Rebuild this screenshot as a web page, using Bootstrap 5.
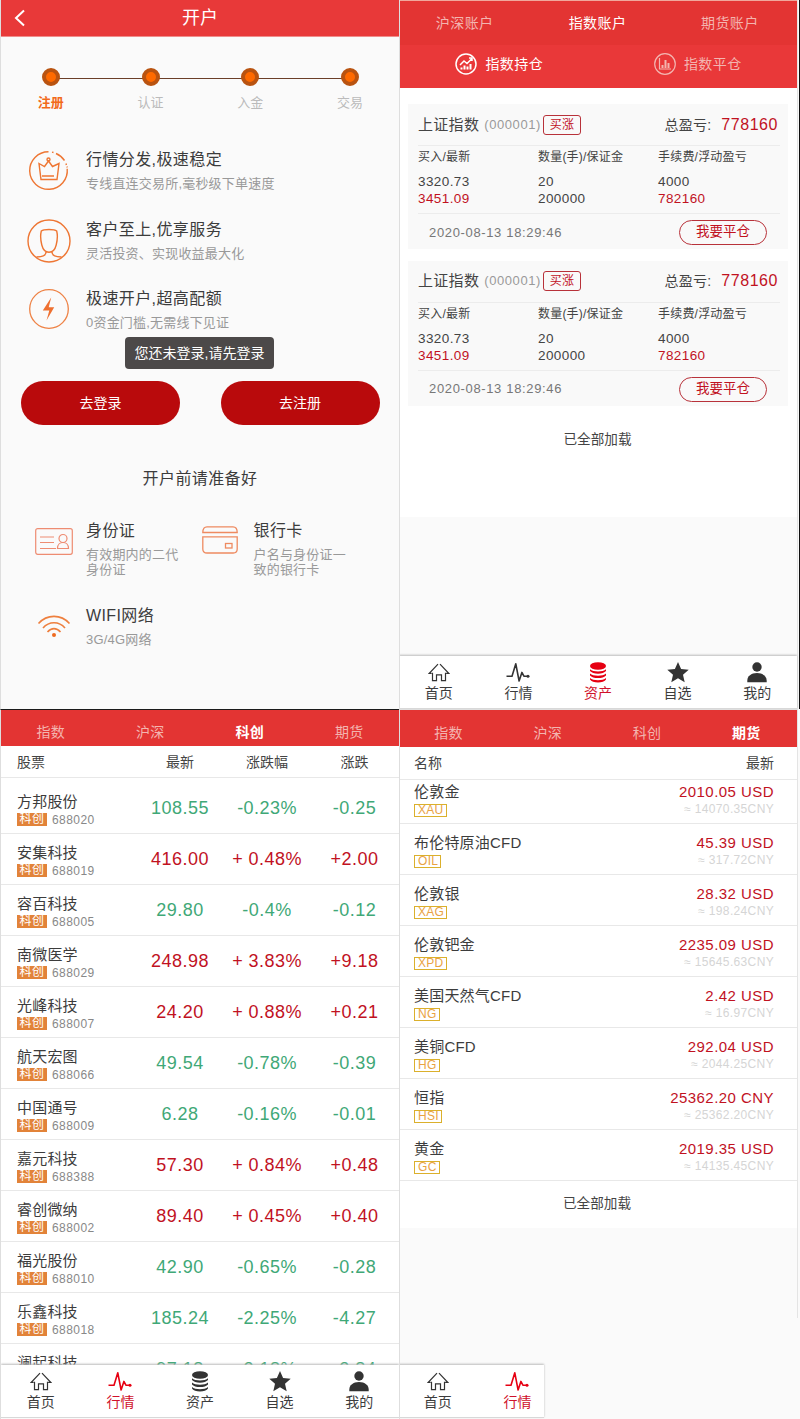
<!DOCTYPE html>
<html lang="zh-CN">
<head>
<meta charset="utf-8">
<meta name="viewport" content="width=device-width, initial-scale=1">
<title>开户</title>
<link href="https://cdn.jsdelivr.net/npm/bootstrap@5.3.0/dist/css/bootstrap.min.css" rel="stylesheet">
<style>
  body { font-family: "Liberation Sans", "Noto Sans CJK SC", sans-serif; font-size: 14px; line-height: 20px; color: #444; background: #fff; width: 800px; height: 1419px; overflow: hidden; }
  .phones { display: grid; grid-template-columns: 399px 401px; grid-template-rows: 709px 710px; }
  .phone { border-left: 1px solid #dedede; overflow: hidden; }
  .soft { background: #fafafa; }
  .bar { background: #e33433; color: #f3b5b0; }
  .bar2 { background: #e93839; }
  .bar .on { color: #fff; }
  .muted { color: #999; }
  .red { color: #c1121f; }
  .green { color: #3fa877; }
  svg { display: block; flex: none; }

  /* account opening */
  .titlebar { background: #e83939; height: 37px; font-size: 18px; border-bottom: 1px solid #ef8d8b; }
  .back { left: 12px; top: 9px; }
  .steps { padding-top: 31px; width: 399px; }
  .step { width: 25%; color: #bbb; font-size: 13px; }
  .step i { width: 18px; height: 18px; border-radius: 50%; background: #ff6a00; border: 4px solid #b95310; z-index: 1; }
  .step b { font-weight: 400; margin-top: 7px; }
  .step.now b { color: #f26a1b; font-weight: 700; }
  .step + .step::before { content: ""; position: absolute; left: -50%; width: 100%; top: 10px; height: 1px; background: #6b3f28; }
  .feature { height: 69.6px; padding-left: 85px; }
  .feature svg, .prep svg { position: absolute; }
  .h-item { font-size: 16px; letter-spacing: .4px; line-height: 24px; color: #3c3c3c; }
  .p-item { font-size: 13px; letter-spacing: .2px; line-height: 15.5px; color: #999; }
  .feature .p-item { margin-top: 4px; }
  .toastbox { left: 124px; top: 337px; width: 149px; height: 32px; border-radius: 4px; background: #4c4949; color: #fff; z-index: 2; }
  .pill { width: 159px; height: 44px; background: #b90a0c; color: #fff; border-radius: 22px; }
  .prep { padding-left: 51px; width: 167.5px; }

  /* positions */
  .pos { background: #f9f9f9; height: 145px; margin: 0 9px 11.5px 8px; padding: 0 8px 0 10px; }
  .pos .top { height: 42px; border-bottom: 1px solid #ececec; }
  .tagbuy { border: 1px solid #b8323a; border-radius: 3px; width: 38px; height: 20px; font-size: 12px; line-height: 18px; letter-spacing: .3px; color: #c1121f; margin-left: 2px; }
  .pos .mid { height: 68px; padding-top: 1px; border-bottom: 1px solid #ececec; font-size: 12px; letter-spacing: .2px; }
  .pos .num { font-size: 13.5px; letter-spacing: .4px; line-height: 17px; }
  .sell { border: 1px solid #b8323a; border-radius: 13px; width: 88px; height: 25px; line-height: 22px; color: #c1121f; margin-right: 13px; font-size: 13.5px; }

  /* bottom tab bar */
  .tabs { height: 53px; background: #fff; box-shadow: 0 -1px 2px #bbb; position: relative; border-bottom: 1px solid #d8d8d8; color: #3c3c3c; }
  .tabs a { width: 79.6px; height: 52px; padding-top: 5px; color: #3c3c3c; text-decoration: none; }
  .tabs a svg { color: #333; }
  .tabs a.on { color: #d0112b; }
  .tabs a.on svg { color: #e60012; }
  .tabs span { line-height: 20px; }

  /* quotes */
  .cols { display: grid; grid-template-columns: 136px 86px 88px 87px; }
  .qhead { height: 32px; border-bottom: 1px solid #e8e8e8; background: #fff; }
  .qrow { height: 51px; border-bottom: 1px solid #e8e8e8; background: #fff; }
  .qname { font-size: 15px; letter-spacing: .2px; line-height: 20px; color: #3c3c3c; }
  .board { background: #e28339; color: #fff; width: 30px; height: 13px; font-size: 12px; line-height: 13px; letter-spacing: .5px; }
  .code { font-size: 12px; letter-spacing: .45px; line-height: 14px; color: #888; }
  .val { font-size: 18px; letter-spacing: .45px; }
  .sym { border: 1px solid #dbb02c; color: #e9a243; font-size: 12px; line-height: 11px; height: 13px; letter-spacing: .3px; padding: 0 2px 0 3px; }
  .price { font-size: 15px; letter-spacing: .45px; line-height: 20px; }
  .cny { font-size: 12px; letter-spacing: .35px; line-height: 14px; color: #d5d5d5; }
</style>
</head>
<body>
<svg width="0" height="0" class="position-absolute">
  <symbol id="i-home" viewBox="0 0 22 22"><path d="M3.600 12.300H1.300L10 3.200M12 3.200l8.700 9.100h-2.500M4.500 11.800v7.800h4v-5.800h5v5.800h4v-7.800" fill="none" stroke="currentColor" stroke-width="1.200"/></symbol>
  <symbol id="i-pulse" viewBox="0 0 24 22"><path d="M.5 15.200H6L9.800 2.800l3.300 17.200 2.800-8.600 2 3.800h4" fill="none" stroke="currentColor" stroke-width="1.600" stroke-linejoin="round"/><circle cx="22" cy="15.200" r="1.500" fill="currentColor"/></symbol>
  <symbol id="i-coins" viewBox="0 0 18 22"><ellipse cx="9" cy="5" rx="8" ry="3.800" fill="currentColor"/><path d="M1 8.200c3 3 13 3 16 0v1.900c-2.500 3.400-13.500 3.400-16 0zM1 12.600c3 3 13 3 16 0v1.900c-2.500 3.400-13.500 3.400-16 0zM1 17c3 3 13 3 16 0v1.400c-2 4-14 4-16 0z" fill="currentColor"/></symbol>
  <symbol id="i-star" viewBox="0 0 22 22"><path d="m11 1 3.100 7 7.600.7-5.700 5 1.700 7.500-6.700-4-6.700 4L6 13.700l-5.700-5 7.600-.7z" fill="currentColor"/></symbol>
  <symbol id="i-user" viewBox="0 0 22 22"><circle cx="11" cy="6" r="4.700" fill="currentColor"/><path d="M1.300 21.200v-1.500c0-4.500 3.800-7.700 9.700-7.700s9.700 3.200 9.700 7.700v1.500z" fill="currentColor"/></symbol>
</svg>

<main class="phones">
  <!-- account opening -->
  <section class="phone soft position-relative">
    <header class="titlebar text-white d-flex align-items-center justify-content-center position-relative">
      <svg class="back position-absolute" width="14" height="18" viewBox="0 0 14 18"><path d="M11 1.500 3 9l8 7.500" fill="none" stroke="#fff" stroke-width="2"/></svg>
      <span>开户</span>
    </header>
    <div class="steps d-flex">
      <div class="step now position-relative d-flex flex-column align-items-center"><i></i><b>注册</b></div>
      <div class="step position-relative d-flex flex-column align-items-center"><i></i><b>认证</b></div>
      <div class="step position-relative d-flex flex-column align-items-center"><i></i><b>入金</b></div>
      <div class="step position-relative d-flex flex-column align-items-center"><i></i><b>交易</b></div>
    </div>
    <div style="padding-top:35px">
      <div class="feature position-relative">
        <svg style="left:26px;top:1px" width="44" height="44" viewBox="0 0 44 44" fill="none" stroke="#ee7633" stroke-width="1.400"><path d="M21.500 2.700a18.800 18.800 0 1 0 18.700 17M25 3.100l1.500.4M29 4.500a19 19 0 0 1 8.500 7M39 14.500l.4 1.500M40 17.500l.2 1"/><path d="M12 14.500l5.500 3 4-5.500 4 5.500 6.500-3-2 16H14zM15 27h12"/><circle cx="21.500" cy="10.500" r="1.500"/></svg>
        <div class="h-item">行情分发,极速稳定</div><div class="p-item">专线直连交易所,毫秒级下单速度</div>
      </div>
      <div class="feature position-relative">
        <svg style="left:26px;top:1px" width="44" height="44" viewBox="0 0 44 44" fill="none" stroke="#ee7633" stroke-width="1.400"><circle cx="22" cy="22" r="21"/><path d="M22 10.500c3.500 0 6.500.5 7.700 1.500 1 4 .8 9-.5 14-1 4-3.400 7.300-7.200 7.300S15.800 30 14.800 26c-1.300-5-1.500-10-.5-14 1.200-1 4.200-1.500 7.700-1.500zM19 33c0 4-4 4.500-9.500 5M25 33c0 4 4 4.500 9.500 5"/></svg>
        <div class="h-item">客户至上,优享服务</div><div class="p-item">灵活投资、实现收益最大化</div>
      </div>
      <div class="feature position-relative">
        <svg style="left:26px;top:0" width="44" height="44" viewBox="0 0 44 44"><circle cx="22" cy="22" r="19.300" fill="none" stroke="#ee8245" stroke-width="1.300"/><path d="m24.200 10.500-8.400 13h6.500L19.500 33.500l7.700-13.300h-5.500z" fill="#ee7030"/></svg>
        <div class="h-item">极速开户,超高配额</div><div class="p-item">0资金门槛,无需线下见证</div>
      </div>
    </div>
    <div class="toastbox position-absolute d-flex align-items-center justify-content-center">您还未登录,请先登录</div>
    <div class="d-flex justify-content-between" style="padding:24.200px 19.500px 0 20px">
      <div class="pill d-flex align-items-center justify-content-center">去登录</div>
      <div class="pill d-flex align-items-center justify-content-center">去注册</div>
    </div>
    <div class="h-item text-center" style="padding-top:42px">开户前请准备好</div>
    <div class="d-flex flex-wrap" style="padding:28px 0 0 34px">
      <div class="prep position-relative">
        <svg style="left:0;top:9px" width="38" height="27" viewBox="0 0 38 27" fill="none" stroke="#ee8c72" stroke-width="1.200"><rect x=".7" y=".7" width="36.600" height="25.600" rx="2"/><path d="M5 9h14M5 14.500h14M5 20.500h16"/><circle cx="28" cy="10.500" r="4"/><path d="M22.500 20.500c0-8 11-8 11 0z"/></svg>
        <div class="h-item">身份证</div><div class="p-item mt-1">有效期内的二代<br>身份证</div>
      </div>
      <div class="prep position-relative">
        <svg style="left:-1px;top:7px" width="36" height="28" viewBox="0 0 36 28" fill="none" stroke="#ee8a60" stroke-width="1.300"><path d="M.8 6.500C.8 2.500 2.500.8 5 .8h26c2.500 0 4.200 1.700 4.200 5.700z"/><path d="M.8 10.800h34.400V23c0 2.500-1.500 4-4 4H5c-2.700 0-4.200-1.500-4.200-4z"/><rect x="23.500" y="17.500" width="6.500" height="4.500"/></svg>
        <div class="h-item">银行卡</div><div class="p-item mt-1">户名与身份证一<br>致的银行卡</div>
      </div>
      <div class="prep position-relative" style="margin-top:26.500px">
        <svg style="left:2px;top:10px" width="34" height="24" viewBox="0 0 34 24" fill="none" stroke="#ee7f3e" stroke-width="1.600"><path d="M1.500 9.500C10 0 24 0 32.500 9.500M6 14c6-7 16-7 22 0M10.500 18c4-4.500 9-4.500 13 0"/><circle cx="17" cy="21" r="2" fill="#ee6a20" stroke="none"/></svg>
        <div class="h-item">WIFI网络</div><div class="p-item mt-1">3G/4G网络</div>
      </div>
    </div>
  </section>

  <!-- index account positions -->
  <section class="phone soft d-flex flex-column" style="border-right:1px solid #111">
    <div class="d-flex flex-column h-100" style="width:398px;border-right:1px solid #e4e4e4">
      <div class="bar" style="border-top:1px solid #f0a79c">
        <div class="d-flex text-center" style="height:44px;line-height:45px;letter-spacing:.4px">
          <span class="col-4" style="padding-right:3px">沪深账户</span><span class="col-4 on" style="padding-right:2px">指数账户</span><span class="col-4" style="padding-right:2px">期货账户</span>
        </div>
        <div class="bar2 d-flex" style="height:43px;letter-spacing:.4px">
          <div class="col-6 on d-flex align-items-center justify-content-center" style="gap:8px;padding-bottom:5px">
            <svg width="22" height="22" viewBox="0 0 22 22" fill="none" stroke="currentColor" stroke-width="1.500"><circle cx="11" cy="11" r="10"/><path d="m5 12 4-4 3 2.500 5-5M14 5h3v3"/><path d="M6.500 16.500v-2M9.500 16.500v-4M12.500 16.500v-3M15.500 16.500V11" stroke-width="2"/></svg>指数持仓</div>
          <div class="col-6 d-flex align-items-center justify-content-center" style="gap:8px;padding-bottom:5px">
            <svg width="22" height="22" viewBox="0 0 22 22" fill="none" stroke="currentColor" stroke-width="1.200"><circle cx="11" cy="11" r="10.300"/><path d="M5.500 5v11H17"/><path d="M8.500 15v-3M11.500 15V7M14.500 15v-5" stroke-width="2"/></svg>指数平仓</div>
        </div>
      </div>
      <div class="bg-white" style="height:429px;padding-top:16px">
        <div id="positions"></div>
        <div class="text-center" style="padding:13px 2px 0 0;font-size:13.600px">已全部加载</div>
      </div>
      <nav class="tabs d-flex mt-auto" data-on="2" style="margin-left:-1px"></nav>
    </div>
  </section>

  <!-- STAR board quotes -->
  <section class="phone bg-white d-flex flex-column" style="border-top:1px solid #1a1a1a">
    <div class="bar d-flex text-center" style="height:36px;line-height:44px;letter-spacing:.3px">
      <span class="col-3">指数</span><span class="col-3">沪深</span><span class="col-3 on fw-bold">科创</span><span class="col-3">期货</span>
    </div>
    <div class="qhead cols align-items-center text-center">
      <span class="text-start" style="padding-left:16px">股票</span><span>最新</span><span>涨跌幅</span><span>涨跌</span>
    </div>
    <div id="stocks" class="overflow-hidden" style="height:587px;padding-top:5px"></div>
    <nav class="tabs d-flex" data-on="1"></nav>
  </section>

  <!-- futures quotes -->
  <section class="phone soft">
    <div style="width:398px;height:609px;border-right:1px solid #e4e4e4">
      <div class="bar d-flex text-center" style="height:38px;line-height:47px;border-top:1px solid #dedede;letter-spacing:.3px;padding-right:1px;margin-left:-1px">
        <span class="col-3">指数</span><span class="col-3">沪深</span><span class="col-3">科创</span><span class="col-3 on fw-bold">期货</span>
      </div>
      <div class="qhead d-flex align-items-center justify-content-between" style="height:33px;padding:0 23px 0 14px"><span>名称</span><span>最新</span></div>
      <div id="futures"></div>
      <div class="bg-white text-center" style="height:47px;line-height:45px;font-size:13.600px;padding-right:3px">已全部加载</div>
    </div>
    <div style="height:47px"></div>
    <nav class="tabs d-flex overflow-hidden" data-on="1" data-count="2" style="width:146px;margin-left:-2px"></nav>
  </section>
</main>

<script>
  const icons = [["home", "首页", 22], ["pulse", "行情", 24], ["coins", "资产", 18], ["star", "自选", 22], ["user", "我的", 22]];
  document.querySelectorAll(".tabs").forEach(n => {
    n.innerHTML = icons.slice(0, n.dataset.count || 5).map(([id, t, w], i) =>
      `<a class="d-flex flex-column align-items-center flex-shrink-0 ${i == n.dataset.on ? "on" : ""}"><svg width="${w}" height="22"><use href="#i-${id}"/></svg><span>${t}</span></a>`).join("");
  });

  const position = `<article class="pos">
    <div class="top d-flex align-items-center"><span style="font-size:15px;letter-spacing:.3px">上证指数</span><span class="muted" style="font-size:13px;letter-spacing:.6px;margin-left:5px">(000001)</span><span class="tagbuy text-center">买涨</span><span class="ms-auto" style="letter-spacing:.2px">总盈亏:</span><span class="red" style="font-size:16px;letter-spacing:.55px;margin:0 2px 0 10px">778160</span></div>
    <div class="mid d-flex">
      <div style="width:120px"><div>买入/最新</div><div class="num" style="padding-top:6px">3320.73</div><div class="num red">3451.09</div></div>
      <div style="width:120px"><div>数量(手)/保证金</div><div class="num" style="padding-top:6px">20</div><div class="num">200000</div></div>
      <div><div>手续费/浮动盈亏</div><div class="num" style="padding-top:6px">4000</div><div class="num red">782160</div></div>
    </div>
    <div class="d-flex align-items-center justify-content-between" style="padding-top:6px"><span style="font-size:13px;letter-spacing:.65px;color:#777;margin-left:11px">2020-08-13 18:29:46</span><span class="sell text-center">我要平仓</span></div>
  </article>`;
  positions.innerHTML = position + position;

  const list = `方邦股份,688020,108.55,-0.23%,-0.25
安集科技,688019,416.00,+ 0.48%,+2.00
容百科技,688005,29.80,-0.4%,-0.12
南微医学,688029,248.98,+ 3.83%,+9.18
光峰科技,688007,24.20,+ 0.88%,+0.21
航天宏图,688066,49.54,-0.78%,-0.39
中国通号,688009,6.28,-0.16%,-0.01
嘉元科技,688388,57.30,+ 0.84%,+0.48
睿创微纳,688002,89.40,+ 0.45%,+0.40
福光股份,688010,42.90,-0.65%,-0.28
乐鑫科技,688018,185.24,-2.25%,-4.27
澜起科技,688008,97.18,-2.18%,-2.84`.split("\n").map(r => r.split(","));
  stocks.innerHTML = list.map(([n, c, p, pc, d]) =>
    `<div class="qrow cols align-items-center text-center ${d[0] == "+" ? "red" : "green"}"><div class="text-start" style="padding:3px 0 0 16px"><div class="qname">${n}</div><div class="d-flex" style="gap:5px;padding-top:1px"><span class="board text-center">科创</span><span class="code">${c}</span></div></div><span class="val">${p}</span><span class="val">${pc}</span><span class="val">${d}</span></div>`).join("");

  const fut = `伦敦金,XAU,2010.05 USD,14070.35
布伦特原油CFD,OIL,45.39 USD,317.72
伦敦银,XAG,28.32 USD,198.24
伦敦钯金,XPD,2235.09 USD,15645.63
美国天然气CFD,NG,2.42 USD,16.97
美铜CFD,HG,292.04 USD,2044.25
恒指,HSI,25362.20 CNY,25362.20
黄金,GC,2019.35 USD,14135.45`.split("\n").map(r => r.split(","));
  futures.innerHTML = fut.map(([n, s, p, c], i) =>
    `<div class="qrow d-flex justify-content-between align-items-end" style="padding:0 23px 5px 14px;${i ? "" : "height:44px"}"><div><div class="qname">${n}</div><div class="d-flex" style="padding:2px 0 1px"><span class="sym">${s}</span></div></div><div class="text-end"><div class="price red">${p}</div><div class="cny" style="margin-bottom:2px">≈ ${c}CNY</div></div></div>`).join("");
</script>
<script src="https://cdn.jsdelivr.net/npm/bootstrap@5.3.0/dist/js/bootstrap.bundle.min.js"></script>
</body>
</html>
